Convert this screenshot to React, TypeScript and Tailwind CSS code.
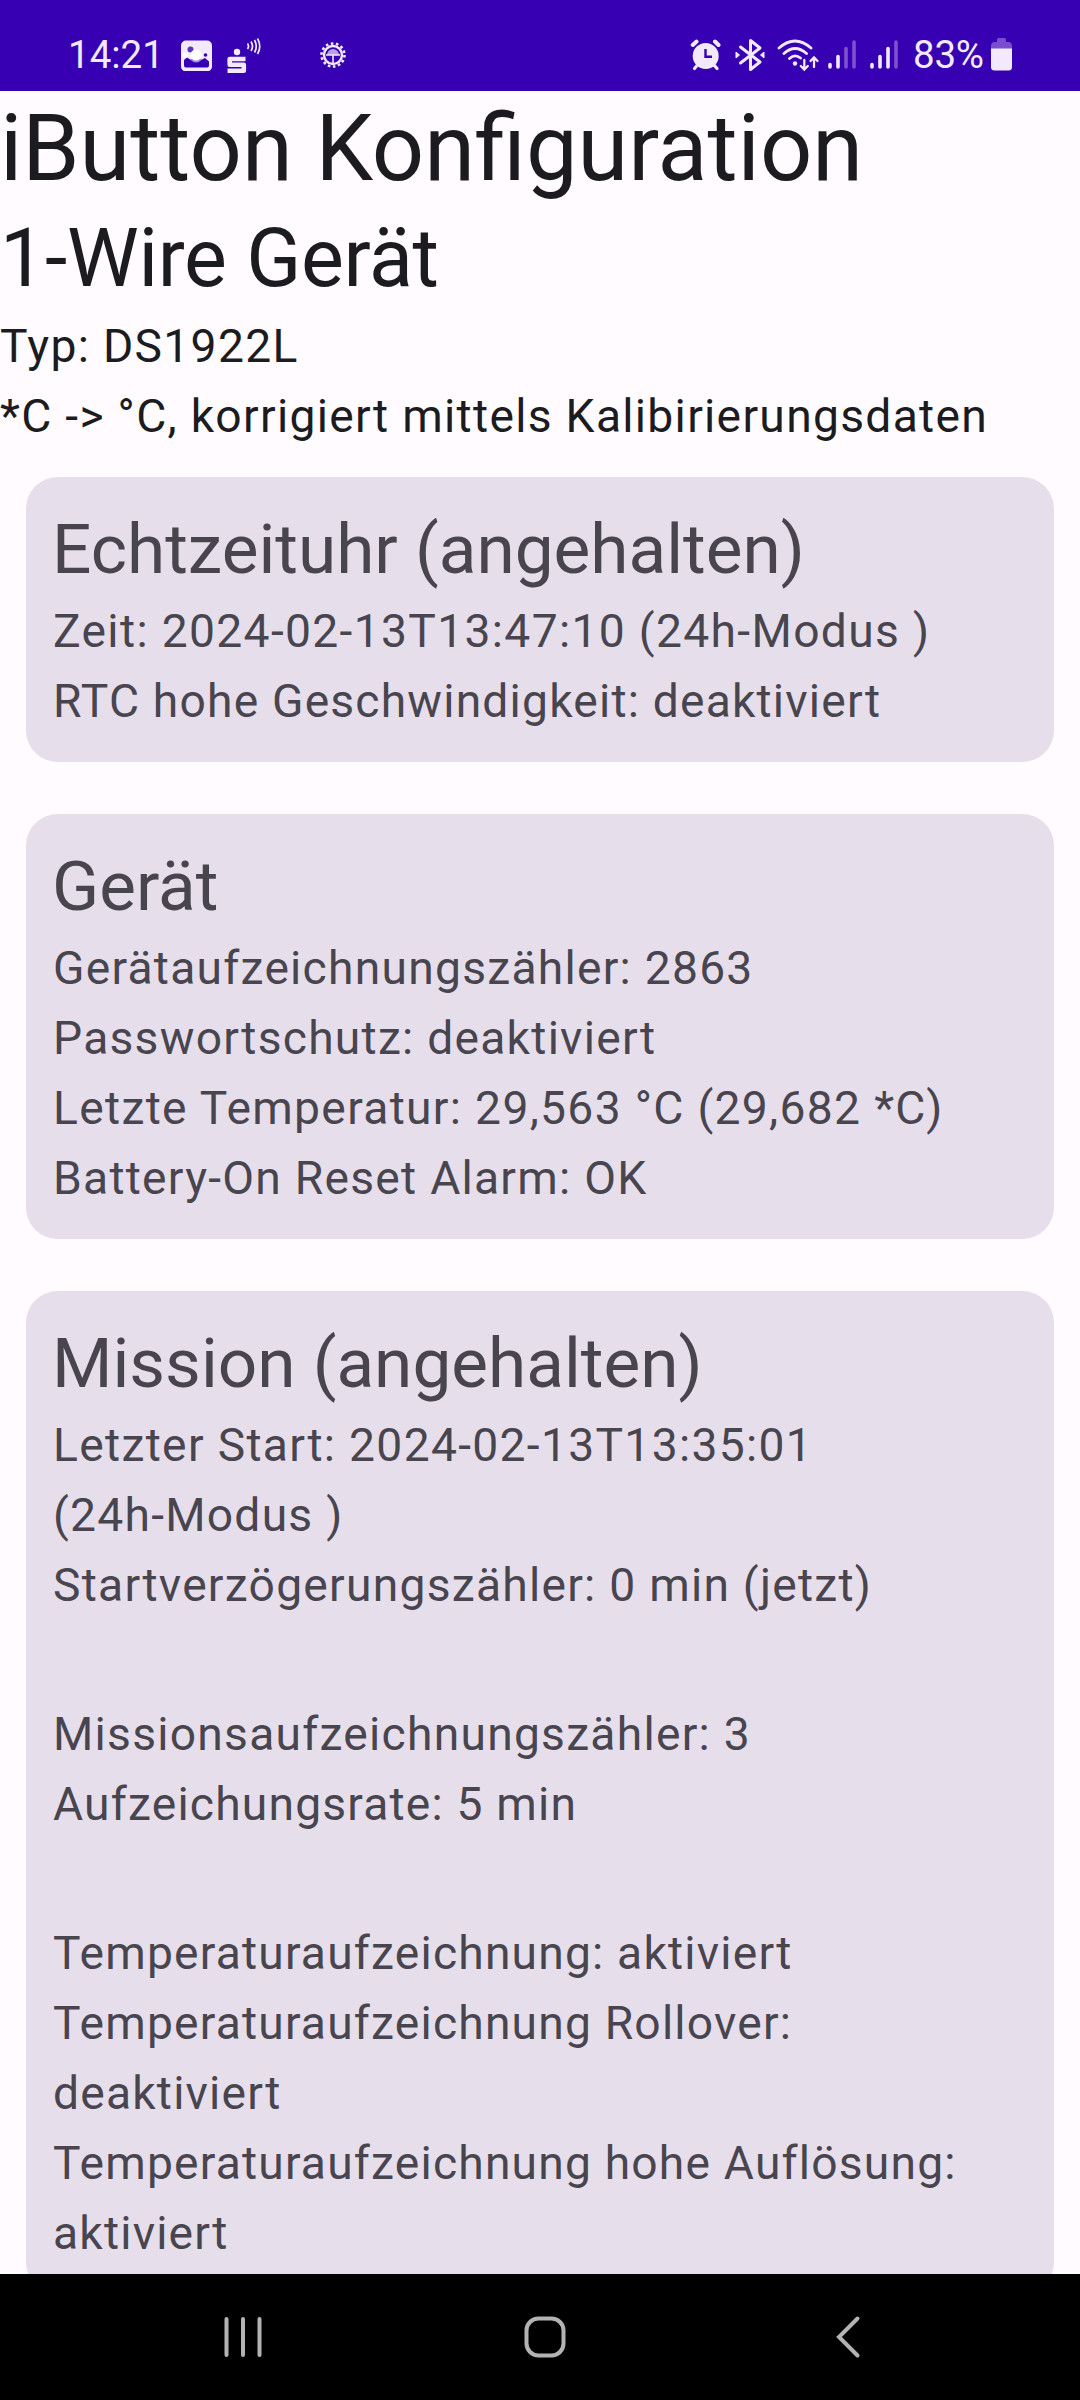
type Line = { text: string; spacing?: string };

const DIGITS = "tracking-[1.32px]";
const MIXED = "tracking-[1.25px]";
const WORDS = "tracking-[1.19px]";

function StatusBar() {
  return (
    <div className="flex h-[91px] w-full shrink-0 items-center bg-[#3700b3] text-[#f2eafc]">
      <span className="ml-[68px] w-[96px] mt-[17px] text-[38.5px] leading-[45px] whitespace-nowrap">14:21</span>
      <svg className="ml-[16px] mt-[19px] h-[32px] w-[32px]" viewBox="0 0 32 32">
        <rect x="1" y="1.500" width="31" height="31" rx="5" fill="#f2eafc" />
        <circle cx="10.500" cy="10.500" r="3" fill="#5a34c0" />
        <path d="M4 21 L7 18.500 L11 21 Q16 24 21 21 L25 19 L29 22.500 V26.500 Q29 28.500 27 28.500 H6 Q4 28.500 4 26.500 Z" fill="#3700b3" />
        <path d="M10 20 Q16 27 22.500 20 Z" fill="#a68ade" />
        <circle cx="25.500" cy="16" r="1.800" fill="#3700b3" />
        <circle cx="5.500" cy="16" r="2.800" fill="#fff" />
        <circle cx="16" cy="16" r="5.500" fill="#fff" />
      </svg>
      <svg className="ml-[14px] mt-[16px] h-[40px] w-[36px]" viewBox="0 0 36 40" fill="none" stroke="#f2eafc">
        <circle cx="11" cy="18" r="3.200" fill="#f2eafc" stroke="none" />
        <path d="M19.500 25 H3.700 V30.700 H17.800 V36.700 H1.500" strokeWidth="4.600" strokeLinejoin="round" />
        <path d="M21.500 9.500 Q23.500 12.500 21.500 15 M25 7.500 Q28 12.500 25 17 M28.500 6 Q32 12.500 28.500 18.500 M31.500 4.500 Q36 12.500 31.500 20" strokeWidth="1.700" />
      </svg>
      <svg className="ml-[58px] mt-[19px] h-[26px] w-[26px]" viewBox="0 0 26 26" fill="none" stroke="#f2eafc">
        <circle cx="13" cy="13" r="11.500" strokeWidth="2.600" strokeDasharray="2.600 2.561" />
        <circle cx="13" cy="13" r="9" strokeWidth="2.400" />
        <path d="M7 13 A6 6 0 0 1 19 13 Z" fill="#b7a0e8" stroke="none" />
        <path d="M6 13 H20 M13 13 V21" strokeWidth="1.600" />
      </svg>
      <svg className="ml-[344px] mt-[19px] h-[34px] w-[32px]" viewBox="0 0 32 34" fill="none" stroke="#f2eafc">
        <circle cx="15.700" cy="18" r="13" fill="#f2eafc" stroke="none" />
        <path d="M2.800 7 L6.500 3.500 M28.500 7 L25 3.500" strokeWidth="4" strokeLinecap="round" />
        <path d="M7.500 27 L4.500 30.500 M24 27 L27 30.500" strokeWidth="3.200" strokeLinecap="round" />
        <path d="M15.500 11 V18.800 H22" stroke="#3700b3" strokeWidth="2.400" />
      </svg>
      <svg className="ml-[13px] mt-[16px] h-[36px] w-[30px]" viewBox="0 0 30 36" fill="none" stroke="#f2eafc">
        <path d="M5.500 11 L25 26 L15.500 33.500 V4.500 L25 12 L5.500 27" strokeWidth="3" strokeLinejoin="round" strokeLinecap="round" />
        <path d="M1 16 L4.500 19 L1 22 Z M29 16 L25.500 19 L29 22 Z" fill="#f2eafc" strokeWidth="1" strokeLinejoin="round" />
      </svg>
      <svg className="ml-[12px] mt-[16px] h-[36px] w-[43px]" viewBox="0 0 43 36" fill="none" stroke="#f2eafc" strokeWidth="2.800" strokeLinecap="round">
        <path d="M2 12 Q18 -2 34 12 M7 17.500 Q18 7.500 29.500 17.500 M12.500 22.500 Q18 17.500 23.500 22" />
        <circle cx="18" cy="27.500" r="2.200" fill="#f2eafc" stroke="none" />
        <path d="M27.300 24 V33.500 M23.800 30 L27.300 33.500 L30.800 30 M37 31 V21.500 M33.500 25 L37 21.500 L40.500 25" strokeWidth="2.300" />
      </svg>
      <svg className="ml-[8px] mt-[17px] h-[30px] w-[28px]" viewBox="0 0 28 30" stroke="#f2eafc" strokeWidth="3.600" strokeLinecap="round">
        <path d="M2 25.500 V28 M10 17.500 V28" />
        <path d="M18 9.500 V28 M26 3 V28" stroke="#7f50d0" />
      </svg>
      <svg className="ml-[14px] mt-[17px] h-[30px] w-[28px]" viewBox="0 0 28 30" stroke="#f2eafc" strokeWidth="3.600" strokeLinecap="round">
        <path d="M2 25.500 V28 M10 17.500 V28 M18 9.500 V28" />
        <path d="M26 3 V28" stroke="#7f50d0" />
      </svg>
      <span className="ml-[15px] w-[72px] mt-[17px] text-[38.5px] leading-[45px] tracking-[-0.2px] whitespace-nowrap">83%</span>
      <svg className="ml-[6px] mt-[17px] h-[34px] w-[21px]" viewBox="0 0 21 34">
        <path d="M6 5 V2.500 Q6 1 7.500 1 H13.500 Q15 1 15 2.500 V5 H17 Q21 5 21 9 V12 H0 V9 Q0 5 4 5 Z" fill="#7a4dcf" />
        <path d="M0 11.500 H21 V30 Q21 33.500 17.500 33.500 H3.500 Q0 33.500 0 30 Z" fill="#f2eafc" />
      </svg>
    </div>
  );
}

function TextLine({ text, spacing = WORDS }: Line) {
  return <p className={"h-[70px] leading-[70px] whitespace-pre " + spacing}>{text}</p>;
}

function Card({ title, groups }: { title: string; groups: Line[][] }) {
  return (
    <section className="mx-[26px] mb-[52px] shrink-0 rounded-[31.5px] bg-[#e6dfeb] p-[26px] text-[#49454f]">
      <h3 className="h-[93px] text-[69.3px] leading-[93px] whitespace-pre">{title}</h3>
      <div className="flex flex-col gap-[79px] pl-px">
        {groups.map((group, g) => (
          <div key={g}>
            {group.map((line) => (
              <TextLine key={line.text} {...line} />
            ))}
          </div>
        ))}
      </div>
    </section>
  );
}

function NavBar() {
  return (
    <nav className="h-[126px] w-full shrink-0 bg-black">
      <svg className="h-[126px] w-[1080px]" viewBox="0 0 1080 126" fill="none" stroke="#b3b3b3" strokeWidth="4" strokeLinecap="round">
        <path d="M226.500 45 V81 M243 45 V81 M259.500 45 V81" />
        <rect x="526.500" y="44.500" width="37" height="37" rx="12" />
        <path d="M857.500 44.500 L839 63 L857.500 81.500" />
      </svg>
    </nav>
  );
}

export default function App() {
  return (
    <div className="flex h-[2400px] w-[1080px] flex-col overflow-hidden bg-[#fffbfe] font-[Roboto,sans-serif] text-[46.2px] text-[#1c1b1f]">
      <StatusBar />
      <main className="flex min-h-0 flex-1 flex-col overflow-hidden">
        <h1 className="h-[116px] shrink-0 text-[91.9px] leading-[116px] whitespace-pre">iButton Konfiguration</h1>
        <h2 className="h-[104px] shrink-0 text-[80.85px] leading-[104px] tracking-[-0.35px] whitespace-pre">1-Wire Gerät</h2>
        <div className="mb-[26px] shrink-0">
          <TextLine text="Typ: DS1922L" spacing={DIGITS} />
          <TextLine text={"*C -> °C, korrigiert mittels Kalibirierungsdaten"} spacing="tracking-[1.3px]" />
        </div>
        <Card
          title="Echtzeituhr (angehalten)"
          groups={[
            [
              { text: "Zeit: 2024-02-13T13:47:10 (24h-Modus )", spacing: "tracking-[1.34px]" },
              { text: "RTC hohe Geschwindigkeit: deaktiviert" },
            ],
          ]}
        />
        <Card
          title="Gerät"
          groups={[
            [
              { text: "Gerätaufzeichnungszähler: 2863", spacing: MIXED },
              { text: "Passwortschutz: deaktiviert", spacing: MIXED },
              { text: "Letzte Temperatur: 29,563 °C (29,682 *C)", spacing: DIGITS },
              { text: "Battery-On Reset Alarm: OK", spacing: MIXED },
            ],
          ]}
        />
        <Card
          title="Mission (angehalten)"
          groups={[
            [
              { text: "Letzter Start: 2024-02-13T13:35:01", spacing: DIGITS },
              { text: "(24h-Modus )", spacing: MIXED },
              { text: "Startverzögerungszähler: 0 min (jetzt)", spacing: MIXED },
            ],
            [
              { text: "Missionsaufzeichnungszähler: 3", spacing: MIXED },
              { text: "Aufzeichungsrate: 5 min" },
            ],
            [
              { text: "Temperaturaufzeichnung: aktiviert" },
              { text: "Temperaturaufzeichnung Rollover:" },
              { text: "deaktiviert" },
              { text: "Temperaturaufzeichnung hohe Auflösung:" },
              { text: "aktiviert" },
            ],
          ]}
        />
      </main>
      <NavBar />
    </div>
  );
}
